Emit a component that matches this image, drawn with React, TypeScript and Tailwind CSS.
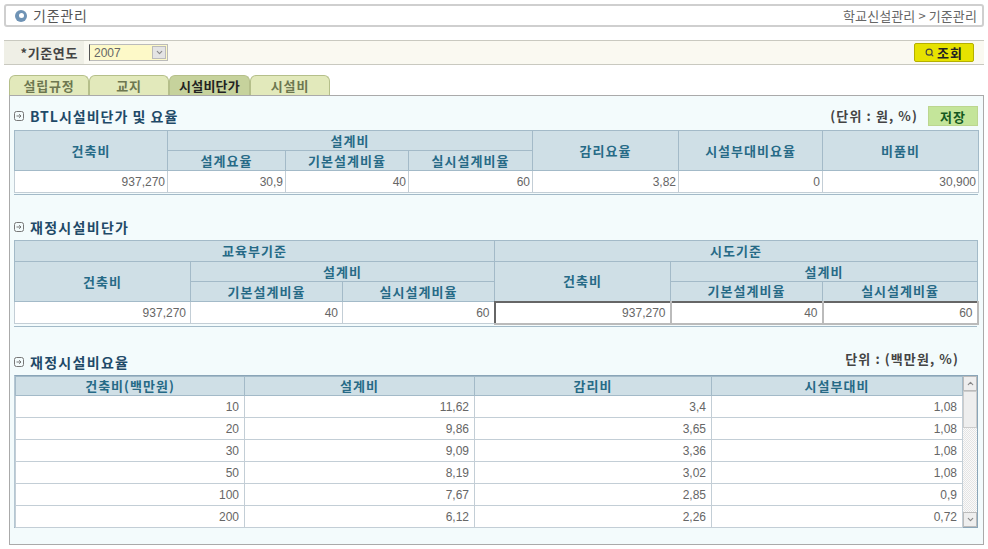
import React from "react";
import { Search, ChevronDown, ChevronUp } from "lucide-react";

const kr = "font-['Noto_Sans_CJK_KR','Noto_Sans',sans-serif]";
const num = "font-['Liberation_Sans','Noto_Sans',sans-serif]";

const Th: React.FC<{ children: React.ReactNode; colSpan?: number; rowSpan?: number }> = ({ children, colSpan, rowSpan }) => (
  <th
    colSpan={colSpan}
    rowSpan={rowSpan}
    className="border border-[#a3bac8] bg-[#cfdfe6] p-0 text-center text-[13px] leading-[18px] font-bold tracking-[1px] text-[#266a86]"
  >
    {children}
  </th>
);

const Td: React.FC<{ children: React.ReactNode; boxed?: boolean; wide?: boolean }> = ({ children, boxed, wide }) => (
  <td
    className={
      boxed
        ? `${num} border-2 border-t-[#666] border-l-[#666] border-r-[#bbb] border-b-[#bbb] bg-white px-1 text-right text-[12px] text-[#666]`
        : wide
          ? `${num} border border-[#c3ced6] bg-white pr-[4px] text-right text-[12px] text-[#666]`
          : `${num} border border-[#c3ced6] bg-white pr-[2px] text-right text-[12px] text-[#666]`
    }
  >
    {children}
  </td>
);

const SectionTitle: React.FC<{ children: React.ReactNode }> = ({ children }) => (
  <div className="flex items-center gap-[6px]">
    <svg width="10" height="10" viewBox="0 0 10 10" fill="none" stroke="#777" strokeWidth="1">
      <rect x="0.5" y="0.5" width="9" height="9" rx="2" />
      <path d="M2.5 5H7M5.2 3.2L7 5L5.2 6.8" />
    </svg>
    <h3 className="text-[14px] leading-[18px] font-bold tracking-[1.3px] text-[#1f4a68]">{children}</h3>
  </div>
);

const rates = [
  ["10", "11,62", "3,4", "1,08"],
  ["20", "9,86", "3,65", "1,08"],
  ["30", "9,09", "3,36", "1,08"],
  ["50", "8,19", "3,02", "1,08"],
  ["100", "7,67", "2,85", "0,9"],
  ["200", "6,12", "2,26", "0,72"],
];

const tabs = ["설립규정", "교지", "시설비단가", "시설비"];

export default function App() {
  return (
    <div className={`${kr} h-[549px] w-[988px] overflow-hidden bg-white pt-[4px] pl-[4px]`}>
      {/* title */}
      <div className="flex h-[23px] w-[980px] items-center justify-between rounded-[3px] border-2 border-[#cfcfcf] pr-[5px] pl-[9px]">
        <div className="flex items-center gap-[6px]">
          <span className="flex h-[12px] w-[12px] items-center justify-center rounded-full bg-[#6f93b5]">
            <span className="h-[5px] w-[5px] rounded-full bg-white" />
          </span>
          <span className="text-[14px] tracking-[0.8px] text-[#555]">기준관리</span>
        </div>
        <span className="text-[13px] tracking-[0.1px] text-[#666]">학교신설관리 &gt; 기준관리</span>
      </div>

      {/* search bar */}
      <div className="mt-[13px] flex h-[25px] w-[980px] items-stretch border-y border-[#c9c9c0] bg-[#faf9f1]">
        <div className="flex w-[80px] items-center justify-end bg-[#efefe6] pr-[6px] text-[13px] font-bold tracking-[0.6px] text-[#444]">
          *기준연도
        </div>
        <div className="ml-[5px] flex items-center">
          <div className={`${num} flex h-[17px] w-[79px] items-center justify-between border border-[#bbb] border-l-[#555] bg-[#fdf9c8] pl-[4px] text-[12px] text-[#666]`}>
            2007
            <span className="mr-[1px] flex h-[13px] w-[14px] items-center justify-center border border-[#bbb] bg-[#e4e4e4]">
              <ChevronDown size={9} strokeWidth={3} className="text-[#888]" />
            </span>
          </div>
        </div>
        <div className="ml-auto mr-[10px] flex items-center">
          <button className="flex h-[19px] w-[60px] items-center justify-center gap-[3px] rounded-[2px] border border-[#b5b000] bg-[#e6e200] text-[13px] font-bold tracking-[1px] text-[#222]">
            <Search size={9} strokeWidth={3} className="text-[#444]" />
            조회
          </button>
        </div>
      </div>

      {/* tabs */}
      <div className="mt-[10px] ml-[5px] flex h-[20px] items-stretch">
        {tabs.map((t, i) => (
          <div
            key={t}
            className={
              i === 2
                ? "flex w-[81px] items-center justify-center rounded-t-[6px] border border-b-0 border-[#b5bf8a] bg-[#c6d29c] text-[13px] font-bold tracking-[0.2px] text-[#222]"
                : "flex w-[80px] items-center justify-center rounded-t-[6px] border border-b-0 border-[#b5bf8a] bg-[#e2e9bb] text-[13px] font-bold tracking-[0.8px] text-[#6d7750]"
            }
          >
            {t}
          </div>
        ))}
      </div>

      {/* panel */}
      <div className="ml-[5px] h-[450px] w-[975px] border border-[#aaa] bg-[#f3fbfc] px-[4px] pt-[10px]">
        <div className="flex items-center justify-between pr-[1px]">
          <SectionTitle>
            <span className="tracking-[1px]">BTL시설비단가 및 요율</span>
          </SectionTitle>
          <div className="flex items-center gap-[10px]">
            <span className="text-[13px] font-bold tracking-[1.1px] text-[#444]">(단위 : 원, %)</span>
            <button className="h-[20px] w-[50px] border border-[#bcd68f] bg-[#c4e59a] text-[13px] leading-none font-bold tracking-[1px] text-[#14591f]">
              저장
            </button>
          </div>
        </div>

        <div className="mt-[4px] h-[65px] w-[964px] border-b border-[#a3bac8]">
          <table className="w-[964px] table-fixed border-collapse">
            <colgroup>
              <col className="w-[153px]" />
              <col className="w-[118px]" />
              <col className="w-[123px]" />
              <col className="w-[124px]" />
              <col className="w-[146px]" />
              <col className="w-[144px]" />
              <col className="w-[156px]" />
            </colgroup>
            <tbody>
              <tr className="h-[20px]">
                <Th rowSpan={2}>건축비</Th>
                <Th colSpan={3}>설계비</Th>
                <Th rowSpan={2}>감리요율</Th>
                <Th rowSpan={2}>시설부대비요율</Th>
                <Th rowSpan={2}>비품비</Th>
              </tr>
              <tr className="h-[20px]">
                <Th>설계요율</Th>
                <Th>기본설계비율</Th>
                <Th>실시설계비율</Th>
              </tr>
              <tr className="h-[22px]">
                <Td>937,270</Td>
                <Td>30,9</Td>
                <Td>40</Td>
                <Td>60</Td>
                <Td>3,82</Td>
                <Td>0</Td>
                <Td>30,900</Td>
              </tr>
            </tbody>
          </table>
        </div>

        <div className="mt-[23px]">
          <SectionTitle>재정시설비단가</SectionTitle>
        </div>

        <div className="mt-[4px] h-[87px] w-[963px] border-b border-[#a3bac8]">
          <table className="w-[963px] table-fixed border-collapse">
            <colgroup>
              <col className="w-[176px]" />
              <col className="w-[152px]" />
              <col className="w-[152px]" />
              <col className="w-[176px]" />
              <col className="w-[152px]" />
              <col className="w-[155px]" />
            </colgroup>
            <tbody>
              <tr className="h-[21px]">
                <Th colSpan={3}>교육부기준</Th>
                <Th colSpan={3}>시도기준</Th>
              </tr>
              <tr className="h-[20px]">
                <Th rowSpan={2}>건축비</Th>
                <Th colSpan={2}>설계비</Th>
                <Th rowSpan={2}>건축비</Th>
                <Th colSpan={2}>설계비</Th>
              </tr>
              <tr className="h-[20px]">
                <Th>기본설계비율</Th>
                <Th>실시설계비율</Th>
                <Th>기본설계비율</Th>
                <Th>실시설계비율</Th>
              </tr>
              <tr className="h-[22px]">
                <Td wide>937,270</Td>
                <Td wide>40</Td>
                <Td wide>60</Td>
                <Td boxed>937,270</Td>
                <Td boxed>40</Td>
                <Td boxed>60</Td>
              </tr>
            </tbody>
          </table>
        </div>

        <div className="mt-[26px] flex items-start justify-between pr-[20px]">
          <SectionTitle>재정시설비요율</SectionTitle>
          <span className="-mt-[4px] text-[13px] font-bold tracking-[1.1px] text-[#444]">단위 : (백만원, %)</span>
        </div>

        <div className="mt-[4px] flex h-[153px] w-[964px] border border-[#8aa5b8] border-l-[#b5c7d3]">
          <table className="h-fit w-[947px] table-fixed border-collapse">
            <colgroup>
              <col className="w-[229px]" />
              <col className="w-[230px]" />
              <col className="w-[237px]" />
              <col className="w-[251px]" />
            </colgroup>
            <thead>
              <tr className="h-[19px]">
                <Th>건축비(백만원)</Th>
                <Th>설계비</Th>
                <Th>감리비</Th>
                <Th>시설부대비</Th>
              </tr>
            </thead>
            <tbody>
              {rates.map((r) => (
                <tr key={r[0]} className="h-[22px]">
                  {r.map((v, i) => (
                    <td
                      key={i}
                      className={`${num} border border-[#c3ced6] bg-white pr-[5px] text-right text-[12px] text-[#666]`}
                    >
                      {v}
                    </td>
                  ))}
                </tr>
              ))}
            </tbody>
          </table>
          <div className="flex w-[15px] flex-col bg-[repeating-conic-gradient(#e4e4e4_0_25%,#fafafa_0_50%)] bg-[length:2px_2px]">
            <span className="flex h-[15px] items-center justify-center border border-[#bbb] bg-[#eee]">
              <ChevronUp size={9} strokeWidth={3} className="text-[#888]" />
            </span>
            <span className="h-[37px] border border-[#ccc] bg-[#eee]" />
            <span className="mt-auto flex h-[15px] items-center justify-center border border-[#bbb] bg-[#eee]">
              <ChevronDown size={9} strokeWidth={3} className="text-[#888]" />
            </span>
          </div>
        </div>
      </div>
    </div>
  );
}
